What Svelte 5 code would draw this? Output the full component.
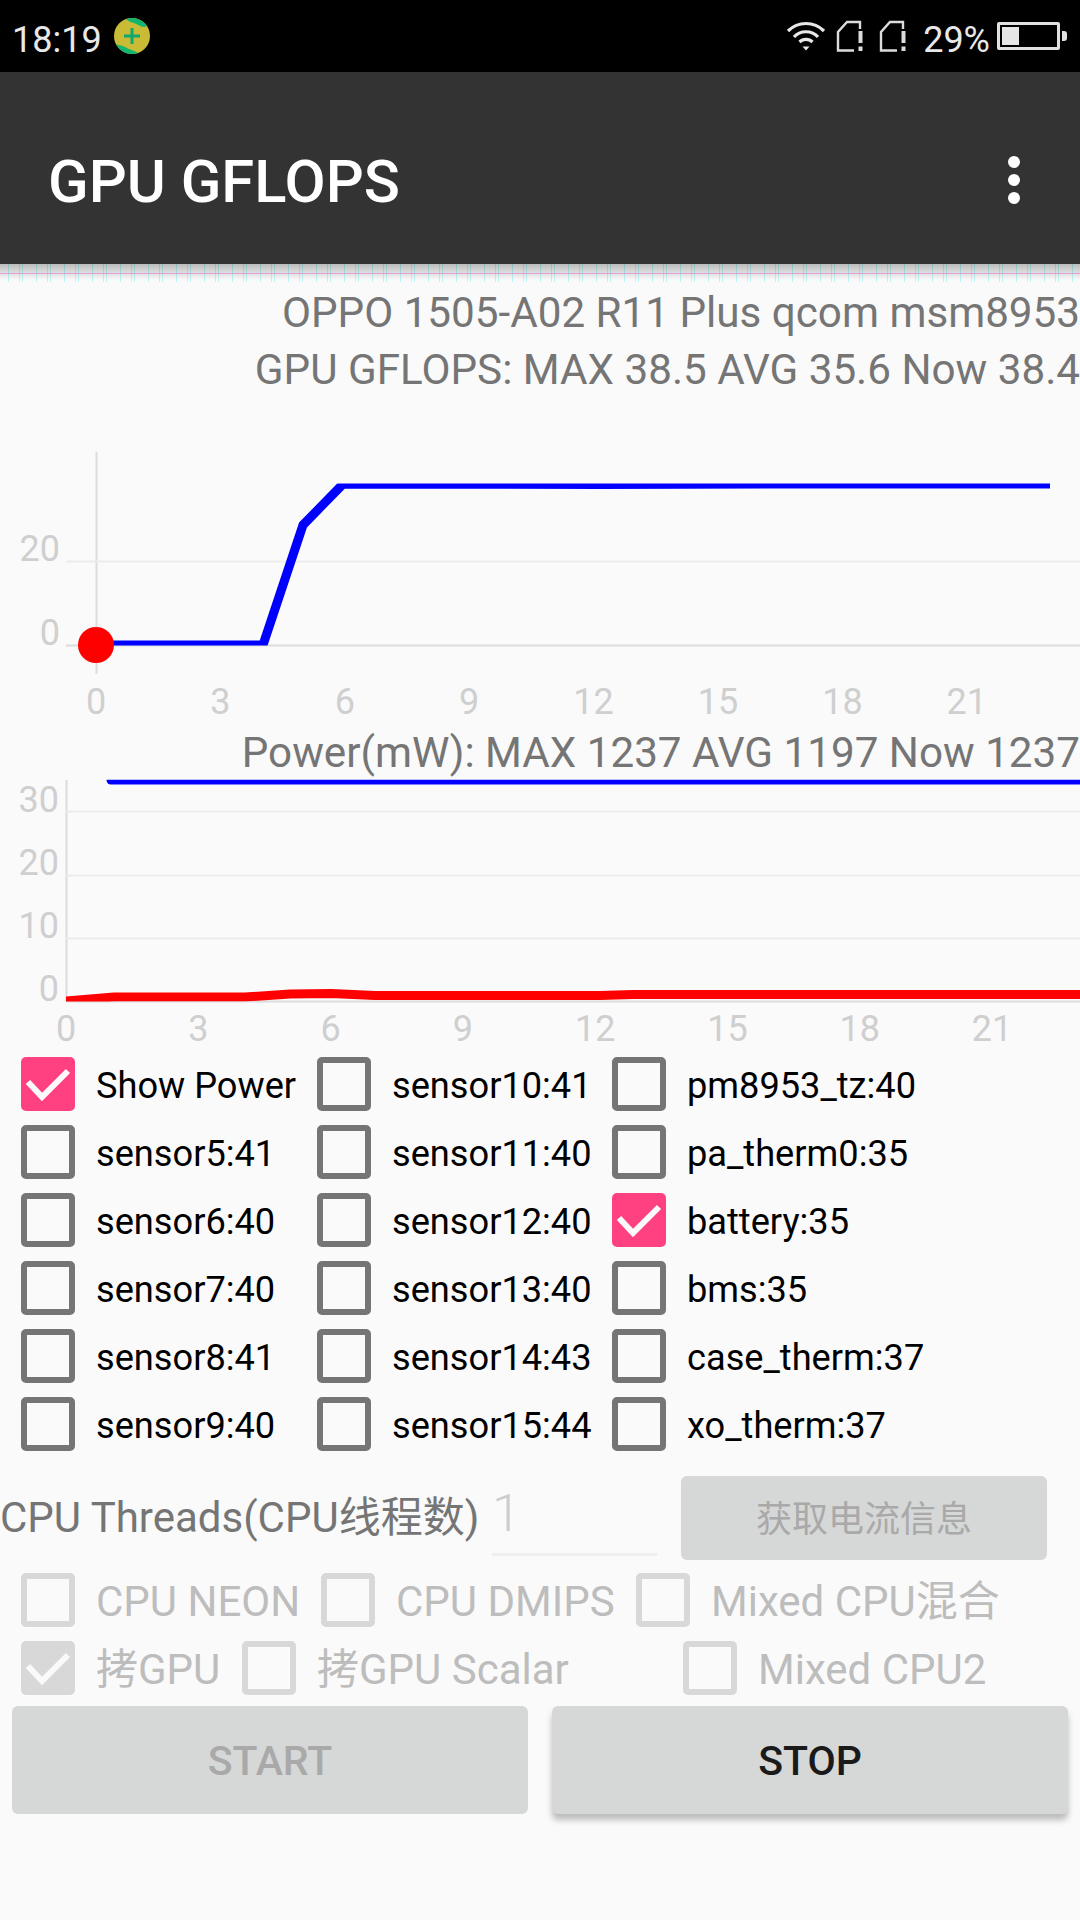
<script>
	const col1 = [["Show Power", true], ["sensor5:41"], ["sensor6:40"], ["sensor7:40"], ["sensor8:41"], ["sensor9:40"]];
	const col2 = [["sensor10:41"], ["sensor11:40"], ["sensor12:40"], ["sensor13:40"], ["sensor14:43"], ["sensor15:44"]];
	const col3 = [["pm8953_tz:40"], ["pa_therm0:35"], ["battery:35", true], ["bms:35"], ["case_therm:37"], ["xo_therm:37"]];
	const sensors = [col1, col2, col3];

	const ticks = [0, 3, 6, 9, 12, 15, 18, 21];
</script>

<div class="screen">
	<div class="status">
		<span class="time">18:19</span>
		<svg class="badge" width="36" height="38" viewBox="0 0 36 38">
			<circle cx="18" cy="19" r="18" fill="#c9bb36" />
			<path d="M12 2 A18 18 0 0 1 33 9 C28 12 24 7 20 6 C16 5 14 4 12 2Z" fill="#10b56f" />
			<path d="M2 27 A18 18 0 0 0 24 36 C20 33 15 33 11 30 C8 28 5 29 2 27Z" fill="#10b56f" />
			<path d="M18 11V27M10 19H26" stroke="#10a86c" stroke-width="3" />
		</svg>
		<span class="spacer"></span>
		<svg class="wifi" width="40" height="30" viewBox="0 0 40 30" fill="none" stroke="#e8e8e8" stroke-width="3.2">
			<path d="M2 10C12 0 28 0 38 10" />
			<path d="M8 16C14 9 26 9 32 16" />
			<path d="M13.5 21C17 17.5 23 17.5 26.5 21" />
			<path d="M16.5 25.5L20 29.5L23.5 25.5Z" fill="#e8e8e8" stroke="none" />
		</svg>
		<svg class="sim" width="29" height="32" viewBox="0 0 29 32" fill="none" stroke="#dcdcdc" stroke-width="2.4">
			<path d="M18 30.5H2V12L11 2H24V9" />
			<path d="M24.5 11V23" stroke-width="4" />
			<path d="M24.5 26.5V31" stroke-width="4" />
		</svg>
		<svg class="sim second" width="29" height="32" viewBox="0 0 29 32" fill="none" stroke="#dcdcdc" stroke-width="2.4">
			<path d="M18 30.5H2V12L11 2H24V9" />
			<path d="M24.5 11V23" stroke-width="4" />
			<path d="M24.5 26.5V31" stroke-width="4" />
		</svg>
		<span class="pct">29%</span>
		<div class="battery"><div class="level"></div></div>
		<div class="nub"></div>
	</div>

	<div class="appbar">
		<span class="title">GPU GFLOPS</span>
		<div class="dots"><i></i><i></i><i></i></div>
	</div>
	<div class="noise"></div>

	<div class="info">
		<div>OPPO 1505-A02 R11 Plus qcom msm8953</div>
		<div>GPU GFLOPS: MAX 38.5 AVG 35.6 Now 38.4</div>
	</div>

	<svg class="chart one" width="1080" height="301" viewBox="0 430 1080 301">
		<defs>
			<clipPath id="plot1"><rect x="66" y="483.4" width="1014" height="162" /></clipPath>
			<clipPath id="plot2"><rect x="66" y="779.8" width="1014" height="221.7" /></clipPath>
		</defs>
		<path d="M96.5 452V674" class="axis" />
		<path d="M66 561.5H1080" class="grid" />
		<path d="M66 645.5H1080" class="axis" />
		<text x="60" y="561" class="lab end">20</text>
		<text x="60" y="645" class="lab end">0</text>
		{#each ticks as t, i}
			<text x={96 + i * 124.4} y="714" class="lab mid">{t}</text>
		{/each}
		<polyline points="96,645 263,645 303,525 343,484 600,484.4 800,484 1050,484" class="blue" clip-path="url(#plot1)" />
		<circle cx="96" cy="645" r="18" fill="#ff0000" />
	</svg>

	<div class="info power">Power(mW): MAX 1237 AVG 1197 Now 1237</div>

	<svg class="chart two" width="1080" height="275" viewBox="0 775 1080 275">
		<path d="M66.5 780V1001" class="axis" />
		<path d="M66 811.5H1080M66 875.5H1080M66 938.5H1080" class="grid" />
		<path d="M66 1001.5H1080" class="axis" />
		<text x="59" y="812" class="lab end">30</text>
		<text x="59" y="875" class="lab end">20</text>
		<text x="59" y="938" class="lab end">10</text>
		<text x="59" y="1001" class="lab end">0</text>
		{#each ticks as t, i}
			<text x={66 + i * 132.3} y="1041" class="lab mid">{t}</text>
		{/each}
		<g clip-path="url(#plot2)">
			<path d="M111 780H1080" stroke="#0000ff" stroke-width="9" stroke-linecap="round" />
			<polyline points="66,1001 114,997 245,997 290,994 331,993.5 375,995.6 600,995.5 633,994.5 1080,994.4" fill="none" stroke="#ff0000" stroke-width="9" />
		</g>
	</svg>

	<div class="sensors">
		{#each sensors as col, c}
			<div class="col c{c}">
				{#each col as [name, on]}
					<div class="check">
						<span class="box" class:on>
							{#if on}
								<svg width="54" height="54" viewBox="0 0 54 54"><path d="M7 25L21 40L47 14" fill="none" stroke="#fafafa" stroke-width="6" /></svg>
							{/if}
						</span>
						<span class="name">{name}</span>
					</div>
				{/each}
			</div>
		{/each}
	</div>

	<div class="threads">
		<span class="tlabel">CPU Threads(CPU线程数)</span>
		<div class="input">1</div>
		<div class="current">获取电流信息</div>
	</div>

	<div class="off row1">
		<div class="check"><span class="box"></span><span class="name">CPU NEON</span></div>
		<div class="check"><span class="box"></span><span class="name">CPU DMIPS</span></div>
		<div class="check"><span class="box"></span><span class="name">Mixed CPU混合</span></div>
	</div>
	<div class="off row2">
		<div class="check">
			<span class="box on">
				<svg width="54" height="54" viewBox="0 0 54 54"><path d="M7 25L21 40L47 14" fill="none" stroke="#fafafa" stroke-width="6" /></svg>
			</span>
			<span class="name">拷GPU</span>
		</div>
		<div class="check"><span class="box"></span><span class="name">拷GPU Scalar</span></div>
		<div class="check"><span class="box"></span><span class="name">Mixed CPU2</span></div>
	</div>

	<div class="actions">
		<div class="btn dis">START</div>
		<div class="btn">STOP</div>
	</div>
</div>

<style>
	:global(body) {
		margin: 0;
		background: #fafafa;
	}

	.screen {
		width: 1080px;
		height: 1920px;
		overflow: hidden;
		background: #fafafa;
		font-family: Roboto, "Noto Sans CJK SC", sans-serif;
	}

	.status {
		height: 72px;
		background: #000;
		display: flex;
		align-items: center;
		color: #e8e8e8;
	}

	.time {
		margin: 7px 0 0 12px;
		font-size: 36px;
	}

	.badge {
		margin-left: 12px;
	}

	.spacer {
		flex: 1;
	}

	.sim {
		margin-left: 10px;
	}

	.sim.second {
		margin-left: 14px;
	}

	.pct {
		margin: 7px 0 0 15px;
		font-size: 36px;
	}

	.battery {
		margin-left: 7px;
		width: 63px;
		height: 28px;
		box-sizing: border-box;
		border: 3px solid #e0e0e0;
		padding: 2px;
		border-radius: 2px;
	}

	.level {
		width: 17px;
		height: 100%;
		background: #e6e6e6;
	}

	.nub {
		width: 5px;
		height: 10px;
		margin: 0 13px 0 2px;
		background: #e0e0e0;
		border-radius: 0 3px 3px 0;
	}

	.appbar {
		height: 192px;
		background: #333;
		display: flex;
		align-items: center;
		justify-content: space-between;
		padding: 28px 60px 0 48px;
		box-sizing: border-box;
	}

	.title {
		font-size: 59.7px;
		font-weight: 500;
		color: #fff;
	}

	.dots {
		display: flex;
		flex-direction: column;
		gap: 6px;
		margin-top: -4px;
	}

	.dots i {
		width: 12px;
		height: 12px;
		border-radius: 50%;
		background: #fff;
	}

	.noise {
		height: 18px;
		background:
			linear-gradient(#00000040, #00000000 16px),
			linear-gradient(transparent 9px, #f8b4f0 9px, #f8b4f0 10.5px, transparent 10.5px),
			repeating-linear-gradient(90deg, transparent 0 8px, #bdf5f5 8px 9.5px, transparent 9.5px 14px),
			repeating-linear-gradient(90deg, transparent 0 19px, #bdf5f5 19px 20.5px, transparent 20.5px 28px);
	}

	.info {
		text-align: right;
		font-size: 42.2px;
		line-height: 57px;
		color: #757575;
		white-space: nowrap;
		padding-top: 2px;
	}

	.power {
		padding: 0;
		line-height: 44px;
	}

	.chart {
		display: block;
	}

	.chart.one {
		margin-top: 32px;
	}

	.lab {
		font-size: 36px;
		fill: #cfcfcf;
	}

	.end {
		text-anchor: end;
	}

	.mid {
		text-anchor: middle;
	}

	.axis {
		stroke: #dcdcdc;
		stroke-width: 2;
		fill: none;
	}

	.grid {
		stroke: #ececec;
		stroke-width: 2;
		fill: none;
	}

	.blue {
		fill: none;
		stroke: #0000ff;
		stroke-width: 9;
	}

	.sensors {
		display: flex;
		padding-left: 21px;
	}

	.col {
		display: flex;
		flex-direction: column;
	}

	.c0 {
		width: 296px;
	}

	.c1 {
		width: 295px;
	}

	.check {
		display: flex;
		align-items: center;
		height: 68px;
		white-space: nowrap;
	}

	.box {
		display: block;
		width: 54px;
		height: 54px;
		box-sizing: border-box;
		border: 6px solid #757575;
		border-radius: 5px;
		flex: none;
	}

	.box.on {
		background: #ff4081;
		border: none;
	}

	.box svg {
		display: block;
	}

	.name {
		margin: 3px 0 0 21px;
		font-size: 36.2px;
		line-height: 48px;
		color: #000;
	}

	.threads {
		display: flex;
		align-items: center;
		height: 84px;
		margin-top: 18px;
	}

	.tlabel {
		font-size: 42px;
		line-height: 50px;
		color: #757575;
		margin: 0 0 0 0;
		width: 492px;
		white-space: nowrap;
	}

	.input {
		align-self: flex-start;
		width: 165px;
		height: 80px;
		box-sizing: border-box;
		border-bottom: 3px solid #eeeeee;
		font-size: 52px;
		font-weight: 300;
		color: #cccccc;
		line-height: 76px;
	}

	.current {
		margin-left: 24px;
		width: 366px;
		height: 84px;
		line-height: 88px;
		text-align: center;
		background: #d6d7d7;
		border-radius: 6px;
		font-size: 36px;
		color: #a9a9a9;
	}

	.off {
		display: flex;
		height: 68px;
		padding-left: 21px;
	}

	.row1 {
		margin-top: 6px;
	}

	.off .box {
		border-color: #d8d8d8;
	}

	.off .box.on {
		background: #d8d8d8;
	}

	.off .name {
		color: #bdbdbd;
		font-size: 42px;
		margin-top: 3px;
	}

	.row1 .check:nth-child(1) {
		width: 300px;
	}

	.row1 .check:nth-child(2) {
		width: 315px;
	}

	.row2 .check:nth-child(1) {
		width: 221px;
	}

	.row2 .check:nth-child(2) {
		width: 441px;
	}

	.actions {
		display: flex;
		justify-content: space-between;
		padding: 0 12px;
		margin-top: 4px;
	}

	.btn {
		width: 516px;
		height: 108px;
		line-height: 110px;
		text-align: center;
		background: #d6d7d7;
		border-radius: 6px;
		font-size: 41px;
		font-weight: 500;
		color: #1a1a1a;
		box-shadow: 0 6px 6px #00000040;
	}

	.btn.dis {
		color: #a9a9a9;
		box-shadow: none;
	}
</style>
